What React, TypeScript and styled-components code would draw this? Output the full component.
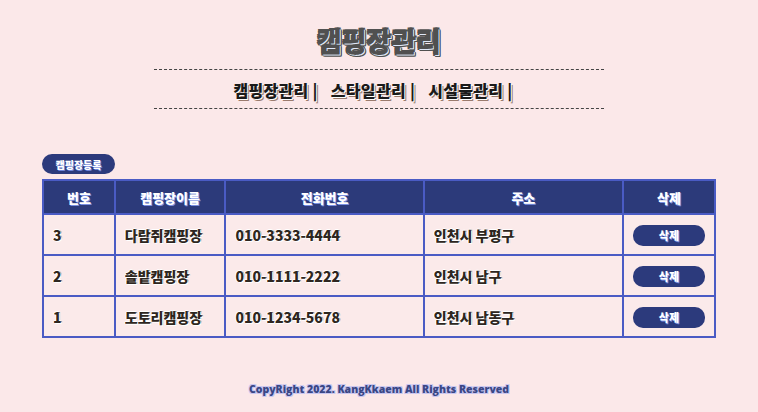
import React from "react";
import styled, { createGlobalStyle } from "styled-components";

const Global = createGlobalStyle`
  html, body { margin: 0; padding: 0; background: #fbe8e9; }
  body { font-family: "Noto Sans CJK KR", "Noto Sans", sans-serif; }
`;

const Page = styled.div`
  width: 758px;
  min-height: 412px;
  display: flex;
  flex-direction: column;
  align-items: center;
  padding-top: 22px;
  box-sizing: border-box;
`;

const Title = styled.h1`
  margin: 0;
  font-size: 27px;
  line-height: 37px;
  font-weight: 900;
  color: #505050;
  text-shadow: 1px 1px 0 #dfe8f8, 2px 2px 0 #505050, -1px -1px 0 #505050, 1px -1px 0 #505050, -1px 1px 0 #505050, 2px 1px 0 #505050, 1px 2px 0 #505050;
`;

const Nav = styled.nav`
  margin-top: 10px;
  width: 450px;
  box-sizing: border-box;
  border-top: 1px dashed #444;
  border-bottom: 1px dashed #444;
  display: flex;
  justify-content: center;
  gap: 13px;
  padding: 7px 12px 5px 0;
`;

const NavLink = styled.a`
  font-size: 16px;
  line-height: 26px;
  font-weight: 900;
  letter-spacing: 0.3px;
  color: #1a1a1a;
  text-decoration: none;
  text-shadow: 1px 1px 0 #fff, 2px 2px 0 #9a7b6e;
`;

const Content = styled.div`
  width: 674px;
  margin-top: 45px;
  display: flex;
  flex-direction: column;
  align-items: flex-start;
`;

const AddButton = styled.button`
  height: 20px;
  width: 73px;
  border: none;
  border-radius: 10px;
  background: #2c3a7c;
  color: #fff;
  font-family: inherit;
  font-size: 10px;
  font-weight: 900;
  padding: 0;
  text-shadow: 1px 1px 0 #6f84d8;
  margin-bottom: 5px;
`;

const Table = styled.table`
  width: 674px;
  border-collapse: collapse;
  border: 2px solid #4a5bc4;
`;

const Th = styled.th`
  height: 32px;
  background: #2c3a7a;
  color: #fff;
  font-size: 13px;
  font-weight: 900;
  border: 2px solid #4a5bc4;
  text-shadow: 1px 1px 0 #7a8fe0;
  padding: 0;
`;

const Td = styled.td<{ $center?: boolean }>`
  height: 39px;
  background: #fbeaea;
  border: 2px solid #4a5bc4;
  padding: 0 9px;
  font-size: 14px;
  font-weight: 900;
  color: #2e2620;
  text-align: ${(p) => (p.$center ? "center" : "left")};
  text-shadow: 1px 1px 0 #fff, -1px 0 0 #fff, 0 -1px 0 #fff, 1px 0 0 #8f7a6a;
`;

const DeleteButton = styled.button`
  width: 72px;
  height: 21px;
  border: none;
  border-radius: 10px;
  background: #2c3a7c;
  color: #fff;
  font-family: inherit;
  font-size: 11px;
  font-weight: 900;
  padding: 0;
  text-shadow: 1px 1px 0 #7a8fe0;
  vertical-align: middle;
`;

const Footer = styled.footer`
  margin-top: 44px;
  font-family: "Open Sans", "Noto Sans", sans-serif;
  font-size: 10.5px;
  font-weight: 800;
  color: #3a4785;
  text-shadow: 1px 1px 0 #c9c6f0, -1px -1px 0 #c9c6f0, 1px -1px 0 #c9c6f0, -1px 1px 0 #c9c6f0;
`;

const rows = [
  { no: 3, name: "다람쥐캠핑장", tel: "010-3333-4444", addr: "인천시 부평구" },
  { no: 2, name: "솔밭캠핑장", tel: "010-1111-2222", addr: "인천시 남구" },
  { no: 1, name: "도토리캠핑장", tel: "010-1234-5678", addr: "인천시 남동구" },
];

export default function App() {
  return (
    <>
      <Global />
      <Page>
        <Title>캠핑장관리</Title>
        <Nav>
          <NavLink>캠핑장관리 |</NavLink>
          <NavLink>스타일관리 |</NavLink>
          <NavLink>시설물관리 |</NavLink>
        </Nav>
        <Content>
          <AddButton>캠핑장등록</AddButton>
          <Table>
            <colgroup>
              <col style={{ width: 72 }} />
              <col style={{ width: 111 }} />
              <col style={{ width: 199 }} />
              <col style={{ width: 200 }} />
              <col style={{ width: 92 }} />
            </colgroup>
            <thead>
              <tr>
                <Th>번호</Th>
                <Th>캠핑장이름</Th>
                <Th>전화번호</Th>
                <Th>주소</Th>
                <Th>삭제</Th>
              </tr>
            </thead>
            <tbody>
              {rows.map((r) => (
                <tr key={r.no}>
                  <Td>{r.no}</Td>
                  <Td>{r.name}</Td>
                  <Td>{r.tel}</Td>
                  <Td>{r.addr}</Td>
                  <Td $center>
                    <DeleteButton>삭제</DeleteButton>
                  </Td>
                </tr>
              ))}
            </tbody>
          </Table>
        </Content>
        <Footer>CopyRight 2022. KangKkaem All Rights Reserved</Footer>
      </Page>
    </>
  );
}
